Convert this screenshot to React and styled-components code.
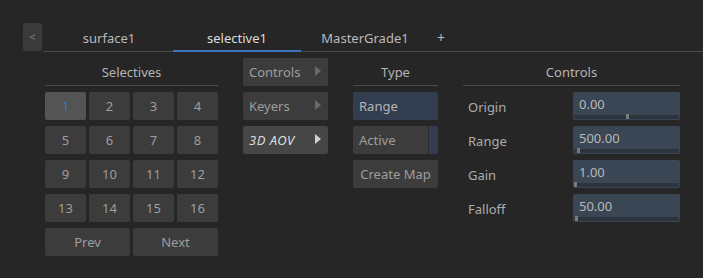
import React from "react";
import styled, { createGlobalStyle, css } from "styled-components";

const Global = createGlobalStyle`
  html, body { margin: 0; padding: 0; background: #262626; }
  body { font-family: "Noto Sans", "Open Sans", sans-serif; font-size: 13px; color: #b0b0b0; }
  * { box-sizing: border-box; }
`;

const Page = styled.div`
  width: 703px;
  height: 278px;
  background: #262626;
  padding: 23px 0 0 23px;
  display: flex;
  flex-direction: column;
  gap: 6px;
`;

const TabBar = styled.div`
  display: flex;
  align-items: stretch;
  height: 29px;
`;

const BackButton = styled.div`
  width: 19px;
  height: 28px;
  background: #3a3a3a;
  border-radius: 2px;
  color: #808080;
  font-size: 11px;
  display: flex;
  align-items: center;
  justify-content: center;
  padding-bottom: 2px;
  margin-right: 1px;
`;

const Tabs = styled.div`
  flex: 1;
  display: flex;
  padding-left: 2px;
  border-bottom: 1px solid #4a4a4a;
`;

const Tab = styled.div`
  width: ${(p) => (p.$small ? "24px" : "128px")};
  display: flex;
  align-items: center;
  justify-content: center;
  padding-top: 2px;
  color: ${(p) => (p.$active ? "#dcdcdc" : "#bababa")};
  font-size: ${(p) => (p.$small ? "14px" : "13px")};
  margin-bottom: -1px;
  border-bottom: 2px solid ${(p) => (p.$active ? "#3b73c0" : "transparent")};
`;

const Body = styled.div`
  display: flex;
  gap: 25px;
  padding-left: 22px;
`;

const Column = styled.div`
  width: ${(p) => p.$w}px;
  display: flex;
  flex-direction: column;
  gap: 6px;
`;

const Header = styled.div`
  height: 28px;
  border-bottom: 1px solid #4a4a4a;
  display: flex;
  align-items: center;
  justify-content: center;
  color: #b4b4b4;
  padding-top: 1px;
`;

const Grid = styled.div`
  display: grid;
  grid-template-columns: repeat(4, 41px);
  grid-auto-rows: 28px;
  column-gap: 3px;
  row-gap: 6px;
`;

const buttonBase = css`
  height: 28px;
  border-radius: 2px;
  background: #3c3c3c;
  display: flex;
  align-items: center;
  color: #9e9e9e;
`;

const GridButton = styled.div`
  ${buttonBase};
  justify-content: center;
  grid-column: span ${(p) => p.$span || 1};
  ${(p) =>
    p.$selected &&
    css`
      background: #545454;
      color: #3a78d0;
    `}
`;

const MenuButton = styled.div`
  ${buttonBase};
  justify-content: space-between;
  padding: 0 7px 0 6px;
  ${(p) =>
    p.$open &&
    css`
      background: #464646;
      color: #dedede;
      font-style: italic;
      letter-spacing: 0.5px;
    `}
`;

const Arrow = styled.span`
  width: 0;
  height: 0;
  border-top: 5px solid transparent;
  border-bottom: 5px solid transparent;
  border-left: 6px solid ${(p) => (p.$open ? "#cfcfcf" : "#6a6a6a")};
  margin-top: -3px;
`;

const TypeButton = styled.div`
  ${buttonBase};
  padding-left: 6px;
  justify-content: ${(p) => (p.$center ? "center" : "flex-start")};
  ${(p) => p.$center && "padding-left: 0;"}
  ${(p) =>
    p.$selected &&
    css`
      background: #323e4f;
      color: #b4b4b4;
    `}
  overflow: hidden;
`;

const ToggleStrip = styled.span`
  margin-left: auto;
  width: 10px;
  height: 100%;
  background: #323e4f;
  border-left: 1px solid #2a2a2a;
`;

const Row = styled.div`
  height: 28px;
  display: flex;
  align-items: center;
`;

const Label = styled.div`
  width: 110px;
  padding-left: 5px;
  color: #acacac;
  padding-top: 2px;
`;

const Field = styled.div`
  width: 107px;
  height: 28px;
  border-radius: 2px;
  background: #3b4654;
  display: flex;
  flex-direction: column;
  padding: 2px 1px 1px 1px;
`;

const FieldValue = styled.div`
  flex: 1;
  padding-left: 5px;
  color: #b8b8b8;
  display: flex;
  align-items: center;
  padding-bottom: 1px;
`;

const Track = styled.div`
  height: 4px;
  background: #2c343e;
  position: relative;
`;

const Handle = styled.span`
  position: absolute;
  bottom: 0;
  width: 3px;
  height: 5px;
  background: #7a7a7a;
`;

const numbers = Array.from({ length: 16 }, (_, i) => i + 1);

const controls = [
  { label: "Origin", value: "0.00", pos: 52 },
  { label: "Range", value: "500.00", pos: 3 },
  { label: "Gain", value: "1.00", pos: 0 },
  { label: "Falloff", value: "50.00", pos: 1 },
];

export default function App() {
  return (
    <>
      <Global />
      <Page>
        <TabBar>
          <BackButton>&lt;</BackButton>
          <Tabs>
            <Tab>surface1</Tab>
            <Tab $active>selective1</Tab>
            <Tab>MasterGrade1</Tab>
            <Tab $small>+</Tab>
          </Tabs>
        </TabBar>
        <Body>
          <Column $w={173}>
            <Header>Selectives</Header>
            <Grid>
              {numbers.map((n) => (
                <GridButton key={n} $selected={n === 1}>
                  {n}
                </GridButton>
              ))}
              <GridButton $span={2}>Prev</GridButton>
              <GridButton $span={2}>Next</GridButton>
            </Grid>
          </Column>
          <Column $w={85}>
            <MenuButton>
              Controls <Arrow />
            </MenuButton>
            <MenuButton>
              Keyers <Arrow />
            </MenuButton>
            <MenuButton $open>
              3D AOV <Arrow $open />
            </MenuButton>
          </Column>
          <Column $w={85}>
            <Header>Type</Header>
            <TypeButton $selected>Range</TypeButton>
            <TypeButton>
              Active
              <ToggleStrip />
            </TypeButton>
            <TypeButton $center>Create Map</TypeButton>
          </Column>
          <Column $w={217}>
            <Header>Controls</Header>
            {controls.map((c) => (
              <Row key={c.label}>
                <Label>{c.label}</Label>
                <Field>
                  <FieldValue>{c.value}</FieldValue>
                  <Track>
                    <Handle style={{ left: `${c.pos}px` }} />
                  </Track>
                </Field>
              </Row>
            ))}
          </Column>
        </Body>
      </Page>
    </>
  );
}
